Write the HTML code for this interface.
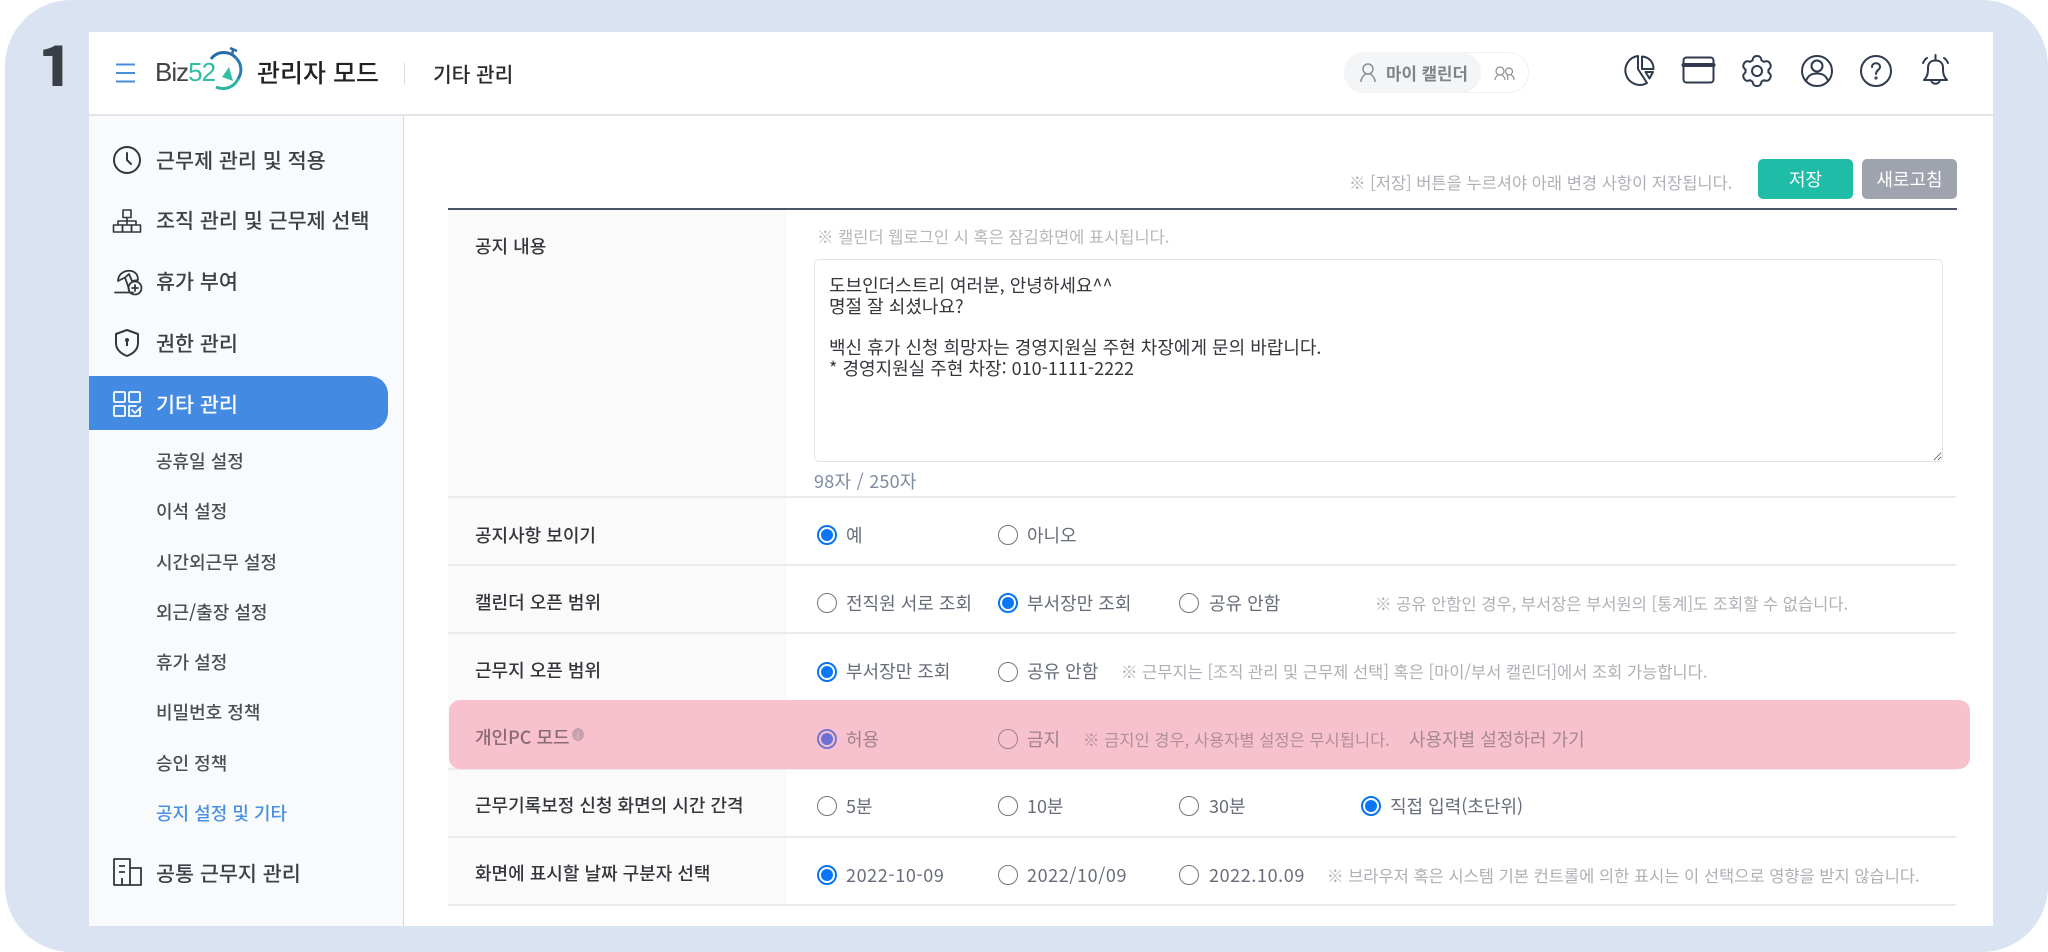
<!DOCTYPE html>
<html lang="ko"><head><meta charset="utf-8"><title>관리자 모드</title>
<style>
html,body{margin:0;padding:0;background:#fff;}
body{width:2048px;height:952px;overflow:hidden;position:relative;font-family:"Liberation Sans","Noto Sans CJK KR",sans-serif;}
#s{position:absolute;left:0;top:0;width:2048px;height:952px;overflow:hidden;font-family:"Noto Sans CJK KR","Liberation Sans",sans-serif;filter:blur(.3px);}
.a{position:absolute;}
.t{position:absolute;line-height:30px;height:30px;white-space:nowrap;}
.m{font-size:20.7px;color:#3c4047;left:156px;font-weight:500;}
.sub{font-size:18px;color:#4a4e55;left:156px;font-weight:500;}
.lab{font-size:18px;color:#33363b;left:475px;font-weight:500;}
.o{font-size:18px;color:#666c78;}
.d{letter-spacing:.6px;}
.h{font-size:16.5px;color:#adb0b5;}
.line{position:absolute;left:448px;width:1508px;height:2px;background:#ebebeb;}
.r{position:absolute;box-sizing:border-box;width:20px;height:20px;border-radius:50%;border:1.5px solid #767676;background:#fff;}
.r.c{border:2px solid #0a75ec;}
.r.c:after{content:"";position:absolute;left:2px;top:2px;width:12px;height:12px;border-radius:50%;background:#0a75f5;}
.r.p{border:2px solid #7678d0;background:#f7c1ce;}
.r.p:after{content:"";position:absolute;left:2px;top:2px;width:12px;height:12px;border-radius:50%;background:#6a71d2;}
.r.q{border-color:#a07d8a;background:#f7c1ce;}
svg{position:absolute;overflow:visible;fill:none;}
</style></head><body>
<div id="s">
<div class="a" style="left:5px;top:0;width:2043px;height:952px;background:#dae3f2;border-radius:66px;"></div>
<div class="a" style="left:89px;top:32px;width:1904px;height:894px;background:#fff;"></div>
<div class="a" style="left:89px;top:114px;width:1904px;height:2px;background:#e3e5e8;"></div>
<div class="t" style="left:36px;top:27px;height:80px;line-height:80px;font-size:68px;font-weight:700;color:#3a3f47;clip-path:inset(0 0 21px 0);">1</div>

<!-- header -->
<svg style="left:116px;top:62px" width="20" height="22"><path d="M0 2.5H19M0 11H19M0 19.5H19" stroke="#4a8cd8" stroke-width="2"/></svg>
<div class="t" style="left:155px;top:57px;font-family:'Liberation Sans',sans-serif;font-size:26px;letter-spacing:-1px;color:#444;">Biz<span style="color:#2ebfa0">52</span></div>
<svg style="left:208px;top:46px" width="36" height="46">
<path d="M3 13A16 16 0 0 1 28 12" stroke="#2a6ca8" stroke-width="3"/>
<path d="M28 12A16.500 16.500 0 0 1 30 33" stroke="#2a7fae" stroke-width="3"/>
<path d="M30 33A16.500 16.500 0 0 1 8 41" stroke="#2bb5a0" stroke-width="3"/>
<path d="M22 2L29 5M25 4L24 9" stroke="#2a6ca8" stroke-width="2.500"/>
<path d="M21 21L14 31L25 35Z" fill="#35bfa3"/>
</svg>
<div class="t" style="left:257px;top:57px;font-size:25px;font-weight:500;color:#222;">관리자 모드</div>
<div class="a" style="left:404px;top:63px;width:1px;height:21px;background:#dcdcdc;"></div>
<div class="t" style="left:433px;top:58px;font-size:20.3px;font-weight:500;color:#2a2a2a;">기타 관리</div>

<!-- pill -->
<div class="a" style="left:1344px;top:52px;width:185px;height:41px;box-sizing:border-box;border:1px solid #f0f1f3;border-radius:20px;background:#fff;"></div>
<div class="a" style="left:1344px;top:52px;width:137px;height:41px;background:#f3f5f7;border-radius:20px;"></div>
<svg style="left:1360px;top:63px" width="16" height="20" stroke="#8b8f94" stroke-width="1.500"><circle cx="8" cy="6" r="5"/><path d="M1 19C1 14 4 12 6 11M15 19C15 14 12 12 10 11"/></svg>
<div class="t" style="left:1386px;top:58px;font-size:16.8px;font-weight:700;color:#7f8388;">마이 캘린더</div>
<svg style="left:1494px;top:66px" width="22" height="16" stroke="#8b8f94" stroke-width="1.200"><circle cx="6" cy="5" r="4"/><path d="M1 14C1 11 3 10 4 9M11 14C11 11 9 10 8 9"/><circle cx="15" cy="5.500" r="3.500"/><path d="M13 9C14 10 13 11 14 14M17 9C19 10 20 11 20 14"/></svg>

<!-- top icons -->
<svg style="left:1620px;top:50px" width="340" height="40" stroke="#2f3a4e" stroke-width="2" stroke-linejoin="round" stroke-linecap="round">
<path d="M18 6A14.500 14.500 0 1 0 27 33L18 19Z"/><path d="M22 6.500V19H33.500C33.500 12 29 7 22 6.500Z"/><path d="M25.500 22H33L29.500 28.500Z"/>
<rect x="63.500" y="7.500" width="30" height="25" rx="3"/><path d="M63.500 15H93.500" stroke-width="4"/>
<g transform="translate(137 21)"><circle r="5"/>
<path d="M-4.600 -10.500C-4 -13 -3.500 -15 0 -15C3.500 -15 4 -13 4.600 -10.500A11.500 11.500 0 0 1 6.800 -9.250"/>
<path transform="rotate(60)" d="M-4.600 -10.500C-4 -13 -3.500 -15 0 -15C3.500 -15 4 -13 4.600 -10.500A11.500 11.500 0 0 1 6.800 -9.250"/>
<path transform="rotate(120)" d="M-4.600 -10.500C-4 -13 -3.500 -15 0 -15C3.500 -15 4 -13 4.600 -10.500A11.500 11.500 0 0 1 6.800 -9.250"/>
<path transform="rotate(180)" d="M-4.600 -10.500C-4 -13 -3.500 -15 0 -15C3.500 -15 4 -13 4.600 -10.500A11.500 11.500 0 0 1 6.800 -9.250"/>
<path transform="rotate(240)" d="M-4.600 -10.500C-4 -13 -3.500 -15 0 -15C3.500 -15 4 -13 4.600 -10.500A11.500 11.500 0 0 1 6.800 -9.250"/>
<path transform="rotate(300)" d="M-4.600 -10.500C-4 -13 -3.500 -15 0 -15C3.500 -15 4 -13 4.600 -10.500A11.500 11.500 0 0 1 6.800 -9.250"/>
</g>
<circle cx="197" cy="21" r="15"/><circle cx="197" cy="16" r="5.500"/><path d="M186 31C188 25 192 23.500 197 23.500C202 23.500 206 25 208 31"/>
<circle cx="256" cy="21" r="15"/><path d="M252 17C252 12 260 12 260 17C260 20 256 20 256 24" /><circle cx="256" cy="28" r=".6"/>
<path d="M304 30C308 26 308 22 308 18C308 13 311 10.500 315.500 10.500C320 10.500 323 13 323 18C323 22 323 26 327 30Z"/><path d="M311 30C312 35 319 35 320 30M315.500 5V10.500M303 13C304 11 305 9 307 8M328 13C327 11 326 9 324 8"/>
</svg>

<!-- sidebar -->
<div class="a" style="left:89px;top:116px;width:314px;height:810px;background:#f8fafc;border-right:1.500px solid #d4dae3;"></div>
<div class="a" style="left:89px;top:376px;width:299px;height:54px;background:#438ae2;border-radius:0 18px 18px 0;"></div>

<svg style="left:113px;top:146px" width="30" height="30" stroke="#33383f" stroke-width="2" stroke-linecap="round" stroke-linejoin="round"><circle cx="14" cy="14" r="13"/><path d="M14 7V14L18 18"/></svg>
<svg style="left:113px;top:209px" width="30" height="26" stroke="#33383f" stroke-width="1.600" stroke-linejoin="round"><rect x="10" y="1" width="8" height="7.500"/><rect x=".5" y="16" width="9" height="7"/><rect x="9.500" y="16" width="9" height="7"/><rect x="18.500" y="16" width="9" height="7"/><path d="M14 8.500V12M5 16V12H23V16M14 12V16"/></svg>
<svg style="left:114px;top:268px" width="30" height="30" stroke="#33383f" stroke-width="1.800" stroke-linecap="round" stroke-linejoin="round"><path d="M4 13C4 3 18 -1 23 7C24 9 24 11 24 12L18 13L15 6L11 9.500L4 13ZM11 9.500L15 21M1 24.500H19"/><circle cx="21" cy="20" r="6.500"/><path d="M21 17V23M18 20H24"/></svg>
<svg style="left:115px;top:328px" width="28" height="30" stroke="#33383f" stroke-width="2" stroke-linejoin="round"><path d="M12 2L23 6V15C23 22 17 26 12 28C7 26 1 22 1 15V6Z"/><circle cx="12" cy="12" r="2" fill="#33383f" stroke="none"/><path d="M12 13V18"/></svg>
<svg style="left:113px;top:390px" width="30" height="28" stroke="#fff" stroke-width="1.800" stroke-linejoin="round" stroke-linecap="round"><rect x="1" y="2" width="11" height="10" rx="1"/><rect x="16" y="2" width="11" height="10" rx="1"/><rect x="1" y="16" width="11" height="10" rx="1"/><path d="M27 18V26H16V16H23M19 20L22 23L28 17"/></svg>
<svg style="left:113px;top:857px" width="30" height="30" stroke="#33383f" stroke-width="1.800" stroke-linejoin="round"><path d="M1 28V2H17V28ZM17 11H28V28H17M1 28H28M6 9H12M6 15H12M9 21V28"/></svg>

<div class="t m" style="top:144px">근무제 관리 및 적용</div>
<div class="t m" style="top:204px">조직 관리 및 근무제 선택</div>
<div class="t m" style="top:265px">휴가 부여</div>
<div class="t m" style="top:327px">권한 관리</div>
<div class="t m" style="top:388px;color:#fff;">기타 관리</div>
<div class="t sub" style="top:446px">공휴일 설정</div>
<div class="t sub" style="top:496px">이석 설정</div>
<div class="t sub" style="top:547px">시간외근무 설정</div>
<div class="t sub" style="top:597px">외근/출장 설정</div>
<div class="t sub" style="top:647px">휴가 설정</div>
<div class="t sub" style="top:697px">비밀번호 정책</div>
<div class="t sub" style="top:748px">승인 정책</div>
<div class="t sub" style="top:798px;color:#4a90e2;">공지 설정 및 기타</div>
<div class="t m" style="top:857px">공통 근무지 관리</div>

<!-- action row -->
<div class="t h" style="left:1349px;top:167px;">※ [저장] 버튼을 누르셔야 아래 변경 사항이 저장됩니다.</div>
<div class="a" style="left:1758px;top:159px;width:95px;height:40px;background:#1fbda8;border-radius:5px;color:#fff;font-size:18px;line-height:40px;text-align:center;">저장</div>
<div class="a" style="left:1862px;top:159px;width:95px;height:40px;background:#9ea3ad;border-radius:5px;color:#fff;font-size:18px;line-height:40px;text-align:center;">새로고침</div>
<div class="a" style="left:448px;top:208px;width:1509px;height:2px;background:#4c5566;"></div>

<!-- label column -->
<div class="a" style="left:448px;top:210px;width:339px;height:695px;background:#fafafa;"></div>
<div class="line" style="top:496px"></div>
<div class="line" style="top:564px"></div>
<div class="line" style="top:632px"></div>
<div class="line" style="top:768px"></div>
<div class="line" style="top:836px"></div>
<div class="line" style="top:904px"></div>

<div class="t lab" style="top:231px">공지 내용</div>
<div class="t h" style="left:817px;top:221px;color:#b5b7ba;">※ 캘린더 웹로그인 시 혹은 잠김화면에 표시됩니다.</div>
<textarea class="a" style="left:814px;top:259px;width:1129px;height:203px;box-sizing:border-box;border:1.500px solid #e1e3e6;border-radius:5px;padding:15px 14px;margin:0;font-family:'Noto Sans CJK KR','Liberation Sans',sans-serif;font-size:18px;line-height:20.800px;color:#33363b;background:#fff;outline:none;overflow:hidden;">도브인더스트리 여러분, 안녕하세요^^
명절 잘 쇠셨나요?

백신 휴가 신청 희망자는 경영지원실 주현 차장에게 문의 바랍니다.
* 경영지원실 주현 차장: 010-1111-2222</textarea>
<div class="t" style="left:814px;top:466px;font-size:18px;letter-spacing:.25px;color:#7d8aa0;">98자 / 250자</div>

<!-- row 공지사항 -->
<div class="t lab" style="top:520px">공지사항 보이기</div>
<div class="r c" style="left:817px;top:525px"></div><div class="t o" style="left:846px;top:520px">예</div>
<div class="r" style="left:998px;top:525px"></div><div class="t o" style="left:1027px;top:520px">아니오</div>

<!-- row 캘린더 -->
<div class="t lab" style="top:587px">캘린더 오픈 범위</div>
<div class="r" style="left:817px;top:593px"></div><div class="t o" style="left:846px;top:588px">전직원 서로 조회</div>
<div class="r c" style="left:998px;top:593px"></div><div class="t o" style="left:1027px;top:588px">부서장만 조회</div>
<div class="r" style="left:1179px;top:593px"></div><div class="t o" style="left:1209px;top:588px">공유 안함</div>
<div class="t h" style="left:1375px;top:588px">※ 공유 안함인 경우, 부서장은 부서원의 [통계]도 조회할 수 없습니다.</div>

<!-- row 근무지 -->
<div class="t lab" style="top:655px">근무지 오픈 범위</div>
<div class="r c" style="left:817px;top:662px"></div><div class="t o" style="left:846px;top:656px">부서장만 조회</div>
<div class="r" style="left:998px;top:662px"></div><div class="t o" style="left:1027px;top:656px">공유 안함</div>
<div class="t h" style="left:1121px;top:656px">※ 근무지는 [조직 관리 및 근무제 선택] 혹은 [마이/부서 캘린더]에서 조회 가능합니다.</div>

<!-- pink row -->
<div class="a" style="left:449px;top:700px;width:1521px;height:69px;background:#f7c1ce;border-radius:11px;"></div>
<div class="t lab" style="top:722px;color:#8a6a76;">개인PC 모드</div>
<div class="a" style="left:572px;top:728px;width:12px;height:13px;border-radius:50%;background:#c6a1ae;color:#f7c1ce;font-size:10px;line-height:13px;text-align:center;">i</div>
<div class="r p" style="left:817px;top:729px"></div><div class="t o" style="left:846px;top:724px;color:#a2808d;">허용</div>
<div class="r q" style="left:998px;top:729px"></div><div class="t o" style="left:1027px;top:724px;color:#a2808d;">금지</div>
<div class="t h" style="left:1083px;top:724px;color:#b08f9b;">※ 금지인 경우, 사용자별 설정은 무시됩니다.</div>
<div class="t" style="left:1409px;top:724px;font-size:18px;color:#a58794;">사용자별 설정하러 가기</div>

<!-- row 근무기록 -->
<div class="t lab" style="top:790px">근무기록보정 신청 화면의 시간 간격</div>
<div class="r" style="left:817px;top:796px"></div><div class="t o" style="left:846px;top:791px">5분</div>
<div class="r" style="left:998px;top:796px"></div><div class="t o" style="left:1027px;top:791px">10분</div>
<div class="r" style="left:1179px;top:796px"></div><div class="t o" style="left:1209px;top:791px">30분</div>
<div class="r c" style="left:1361px;top:796px"></div><div class="t o" style="left:1390px;top:791px">직접 입력(초단위)</div>

<!-- row 날짜 -->
<div class="t lab" style="top:858px">화면에 표시할 날짜 구분자 선택</div>
<div class="r c" style="left:817px;top:865px"></div><div class="t o d" style="left:846px;top:860px">2022-10-09</div>
<div class="r" style="left:998px;top:865px"></div><div class="t o d" style="left:1027px;top:860px">2022/10/09</div>
<div class="r" style="left:1179px;top:865px"></div><div class="t o d" style="left:1209px;top:860px">2022.10.09</div>
<div class="t h" style="left:1327px;top:860px">※ 브라우저 혹은 시스템 기본 컨트롤에 의한 표시는 이 선택으로 영향을 받지 않습니다.</div>
</div>
</body></html>
